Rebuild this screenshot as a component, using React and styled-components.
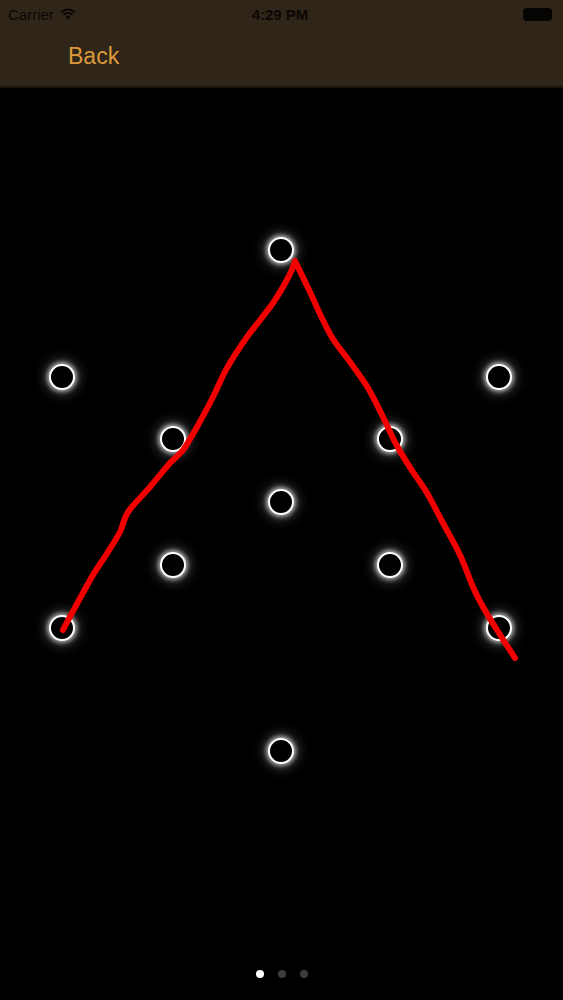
import React from 'react';
import styled, { createGlobalStyle } from 'styled-components';

const GlobalStyle = createGlobalStyle`
html, body {
  margin: 0;
  padding: 0;
  background: #000;
}
body {
  font-family: "Liberation Sans", Arial, sans-serif;
}
`

const Screen = styled.div`
width: 563px;
height: 1000px;
display: flex;
flex-direction: column;
background: #000;
overflow: hidden;
`
const Header = styled.div`
height: 86px;
display: flex;
flex-direction: column;
background: #2f2519;
border-bottom: 2px solid #1a140d;
`
const StatusBar = styled.div`
height: 28px;
display: grid;
grid-template-columns: 1fr auto 1fr;
align-items: center;
padding: 0 11px 0 8px;
color: #0b0805;
font-size: 15px;
`
const Carrier = styled.div`
display: flex;
align-items: center;
gap: 6px;
`
const Time = styled.div`
font-weight: bold;
font-size: 15px;
`
const Battery = styled.div`
justify-self: end;
width: 29px;
height: 13px;
border-radius: 4px;
background: #050403;
`
const NavBar = styled.div`
flex: 1;
display: flex;
align-items: center;
padding-left: 68px;
padding-bottom: 2px;
`
const BackButton = styled.span`
color: #de9a3a;
font-size: 23px;
font-family: "Liberation Sans", Arial, sans-serif;
`
const Board = styled.div`
position: relative;
flex: 1;
`
const Dot = styled.div`
position: absolute;
width: 22px;
height: 22px;
margin: -13.5px 0 0 -13.5px;
border: 2.5px solid #fff;
border-radius: 50%;
background: #000;
box-shadow: 0 0 4px 2px rgba(255, 255, 255, 0.6), 0 0 12px 5px rgba(255, 255, 255, 0.22);
`
const Trace = styled.svg`
position: absolute;
left: 0;
top: 0;
width: 563px;
height: 860px;
`
const Pager = styled.div`
height: 52px;
display: flex;
justify-content: center;
gap: 14px;
padding-top: 22px;
box-sizing: border-box;
`
const PageDot = styled.span`
width: 8px;
height: 8px;
border-radius: 50%;
background: ${(p) => (p.active ? '#fff' : '#3d3d3d')};
`

const OFFSET = 88;
const dots = [
  [281, 250], [62, 377], [499, 377], [173, 439], [390, 439],
  [281, 502], [173, 565], [390, 565], [62, 628], [499, 628], [281, 751],
];

const left = [
  [63, 630], [72, 613], [93, 575], [106, 555], [120, 532], [128, 512],
  [150, 487], [170, 463], [183, 450], [197, 427], [213, 397], [227, 368],
  [247, 337], [273, 303], [289, 276], [295, 261],
];
const right = [
  [295, 261], [310, 292], [320, 314], [333, 339], [350, 362], [368, 388],
  [383, 417], [397, 446], [413, 472], [427, 493], [443, 523], [460, 555],
  [473, 587], [483, 607], [497, 630], [515, 658],
];

// catmull-rom through the sampled stroke points
const smooth = (pts) => {
  const p = pts.map(([x, y]) => [x, y - OFFSET]);
  let d = `M${p[0][0]} ${p[0][1]}`;
  for (let i = 0; i < p.length - 1; i++) {
    const p0 = p[i - 1] || p[i];
    const p1 = p[i];
    const p2 = p[i + 1];
    const p3 = p[i + 2] || p2;
    const c1 = [p1[0] + (p2[0] - p0[0]) / 6, p1[1] + (p2[1] - p0[1]) / 6];
    const c2 = [p2[0] - (p3[0] - p1[0]) / 6, p2[1] - (p3[1] - p1[1]) / 6];
    d += ` C${c1[0].toFixed(1)} ${c1[1].toFixed(1)} ${c2[0].toFixed(1)} ${c2[1].toFixed(1)} ${p2[0]} ${p2[1]}`;
  }
  return d;
};

const Wifi = () => (
  <svg width="16" height="12" viewBox="0 0 16 12">
    <path d="M8 11.5 L5.6 8.9 A3.4 3.4 0 0 1 10.4 8.9 Z" fill="#0b0805" />
    <path d="M3.6 6.8 A6.2 6.2 0 0 1 12.4 6.8" stroke="#0b0805" strokeWidth="1.8" fill="none" />
    <path d="M1.2 4.3 A9.6 9.6 0 0 1 14.8 4.3" stroke="#0b0805" strokeWidth="1.8" fill="none" />
  </svg>
);

export default function App() {
  const d = `${smooth(left)} ${smooth(right)}`;
  return (
    <Screen>
      <GlobalStyle />
      <Header>
        <StatusBar>
          <Carrier>Carrier <Wifi /></Carrier>
          <Time>4:29 PM</Time>
          <Battery />
        </StatusBar>
        <NavBar>
          <BackButton>Back</BackButton>
        </NavBar>
      </Header>
      <Board>
        {dots.map(([x, y], i) => (
          <Dot key={i} style={{ left: x, top: y - OFFSET }} />
        ))}
        <Trace viewBox="0 0 563 860">
          <path d={d} stroke="#f20000" strokeWidth="6" fill="none" strokeLinecap="round" strokeLinejoin="round" />
        </Trace>
      </Board>
      <Pager>
        <PageDot active />
        <PageDot />
        <PageDot />
      </Pager>
    </Screen>
  );
}
